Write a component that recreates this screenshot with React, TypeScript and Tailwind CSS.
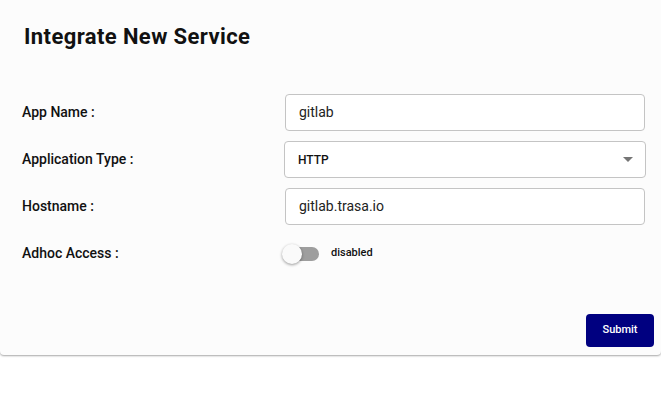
import React from 'react';

const Field: React.FC<{ label: string; children: React.ReactNode }> = ({ label, children }) => (
  <div className="flex items-center">
    <label className="w-[263px] shrink-0 text-[14px] font-medium text-[#111]">{label}</label>
    <div className="flex-1">{children}</div>
  </div>
);

const App: React.FC = () => {
  return (
    <div className="min-h-[408px] bg-white" style={{ fontFamily: 'Roboto, "Noto Sans", sans-serif' }}>
      <div className="bg-[#fcfcfc] h-[355px] rounded-b shadow-[0_1px_2px_rgba(0,0,0,0.35)] flex flex-col pl-[22px] pr-[16px]">
        <h1 className="mt-[20px] ml-[2px] text-[22px] font-bold text-[#111] tracking-[0.4px]">Integrate New Service</h1>

        <div className="mt-[41px] flex flex-col gap-[10px]">
          <Field label="App Name :">
            <div className="h-[37px] rounded border border-[#c4c4c4] bg-white flex items-center px-[13px] text-[14px] text-[#222]">gitlab</div>
          </Field>
          <Field label="Application Type :">
            <div className="h-[37px] -mx-px rounded border border-[#c4c4c4] bg-white flex items-center justify-between pl-[13px] pr-[12px] text-[12px] font-medium text-[#111]">
              <span>HTTP</span>
              <svg width="10" height="5" viewBox="0 0 10 5"><path d="M0 0h10L5 5z" fill="#757575" /></svg>
            </div>
          </Field>
          <Field label="Hostname :">
            <div className="h-[37px] rounded border border-[#c4c4c4] bg-white flex items-center px-[13px] text-[14px] text-[#222]">gitlab.trasa.io</div>
          </Field>
          <div className="flex items-center h-[37px]">
            <label className="w-[263px] shrink-0 text-[14px] font-medium text-[#111]">Adhoc Access :</label>
            <div className="flex items-center">
              <div className="relative w-[37px] h-[20px] flex items-center">
                <div className="ml-[2px] w-[32px] h-[14px] rounded-full bg-[#9e9e9e]" />
                <div className="absolute -left-[3px] top-0 w-[20px] h-[20px] rounded-full bg-[#fafafa] shadow-[0_1px_3px_rgba(0,0,0,0.4)]" />
              </div>
              <span className="ml-[9px] text-[11px] font-medium text-[#111]">disabled</span>
            </div>
          </div>
        </div>

        <div className="mt-auto mb-[8px] -mr-[9px] flex justify-end">
          <button className="w-[68px] h-[33px] rounded bg-[#000080] text-white text-[11px] font-medium">Submit</button>
        </div>
      </div>
    </div>
  );
};

export default App;
